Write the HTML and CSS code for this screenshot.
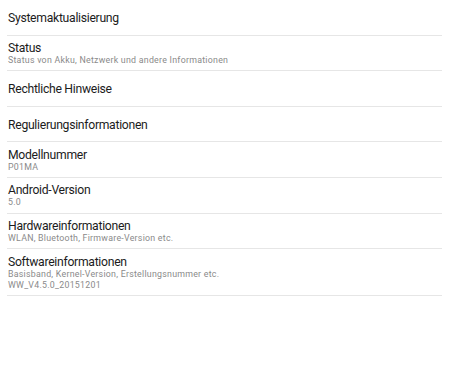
FILE: index.html
```html
<!DOCTYPE html>
<html lang="de">
<head>
<meta charset="utf-8">
<link rel="stylesheet" href="styles.css">
</head>
<body>
<ul class="list">
  <li class="row"><span class="title">Systemaktualisierung</span></li>
  <li class="row"><span class="title">Status</span><span class="sub">Status von Akku, Netzwerk und andere Informationen</span></li>
  <li class="row"><span class="title">Rechtliche Hinweise</span></li>
  <li class="row"><span class="title">Regulierungsinformationen</span></li>
  <li class="row"><span class="title">Modellnummer</span><span class="sub">P01MA</span></li>
  <li class="row"><span class="title">Android-Version</span><span class="sub">5.0</span></li>
  <li class="row"><span class="title">Hardwareinformationen</span><span class="sub">WLAN, Bluetooth, Firmware-Version etc.</span></li>
  <li class="row tall"><span class="title">Softwareinformationen</span><span class="sub">Basisband, Kernel-Version, Erstellungsnummer etc.</span><span class="sub">WW_V4.5.0_20151201</span></li>
</ul>
</body>
</html>
```

FILE: styles.css
```css
html, body {
  margin: 0;
  padding: 0;
  background: #ffffff;
}
body {
  font-family: Roboto, "Noto Sans", sans-serif;
  width: 450px;
  height: 380px;
  overflow: hidden;
}
.list {
  list-style: none;
  margin: 0 8px 0 7px;
  padding: 0;
}
.row {
  box-sizing: border-box;
  height: 35.6px;
  border-bottom: 1px solid #e6e6e6;
  display: flex;
  flex-direction: column;
  justify-content: center;
  padding-left: 1px;
}
.row.tall {
  height: 47px;
}
.title {
  font-size: 12.2px;
  letter-spacing: -0.29px;
  line-height: 14px;
  padding-top: 1px;
  color: #1c1c1c;
}
.sub {
  font-size: 8.8px;
  letter-spacing: 0.26px;
  line-height: 10.6px;
  color: #8a8a8a;
}
```
